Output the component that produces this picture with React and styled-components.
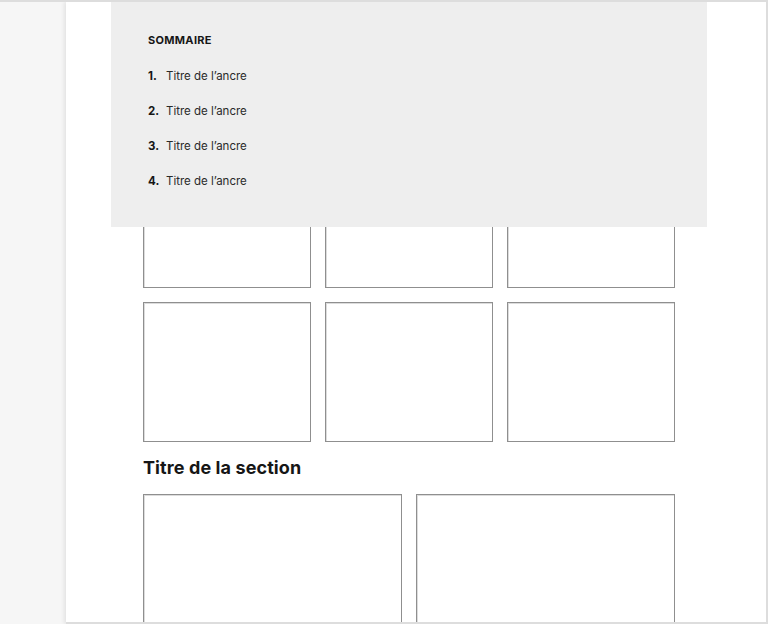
import React from "react";
import styled, { createGlobalStyle } from "styled-components";

const anchors = ["Titre de l’ancre", "Titre de l’ancre", "Titre de l’ancre", "Titre de l’ancre"];

const App = () => {
  return (
    <>
      <GlobalStyle />
      <Frame>
        <Side />
        <Panel>
          <Summary>
            <SummaryTitle>Sommaire</SummaryTitle>
            <SummaryList>
              {anchors.map((label, i) => (
                <SummaryItem key={i}>
                  <ItemNumber>{i + 1}.</ItemNumber>
                  <ItemLink>{label}</ItemLink>
                </SummaryItem>
              ))}
            </SummaryList>
          </Summary>
          <Content>
            <CardGrid cols={3}>
              <Card height={139} />
              <Card height={139} />
              <Card height={139} />
              <Card height={140} />
              <Card height={140} />
              <Card height={140} />
            </CardGrid>
            <SectionTitle>Titre de la section</SectionTitle>
            <CardGrid cols={2}>
              <Card height={160} />
              <Card height={160} />
            </CardGrid>
          </Content>
        </Panel>
      </Frame>
    </>
  );
};

export default App;

const GlobalStyle = createGlobalStyle`
  html, body {
    margin: 0;
    padding: 0;
    background: #f6f6f6;
    font-family: Inter, "Noto Sans", sans-serif;
    color: #161616;
  }
`;

const Frame = styled.div`
  display: flex;
  width: 768px;
  height: 624px;
  box-sizing: border-box;
  border-top: 2px solid #dddddd;
  border-right: 2px solid #dddddd;
  background: #f6f6f6;
  overflow: hidden;
`;

const Side = styled.div`
  width: 66px;
  flex-shrink: 0;
`;

const Panel = styled.div`
  position: relative;
  flex: 1;
  background: #ffffff;
  border-bottom: 2px solid #dddddd;
  box-shadow: -2px 0 4px rgba(0, 0, 0, 0.08);
  overflow: hidden;
`;

const Summary = styled.nav`
  position: absolute;
  top: 0;
  left: 45px;
  width: 596px;
  height: 225px;
  box-sizing: border-box;
  padding: 28px 37px 0;
  background: #eeeeee;
  z-index: 1;
`;

const SummaryTitle = styled.div`
  font-size: 11px;
  line-height: 20px;
  font-weight: 700;
  letter-spacing: 0.3px;
  text-transform: uppercase;
`;

const SummaryList = styled.ol`
  list-style: none;
  margin: 16px 0 0;
  padding: 0;
  display: flex;
  flex-direction: column;
  gap: 15px;
`;

const SummaryItem = styled.li`
  display: flex;
  font-size: 11.5px;
  line-height: 20px;
`;

const ItemNumber = styled.span`
  width: 18px;
  font-weight: 700;
`;

const ItemLink = styled.span`
  color: #2a2a2a;
`;

const Content = styled.div`
  width: 532px;
  padding: 147px 0 0 77px;
`;

const CardGrid = styled.div`
  display: grid;
  grid-template-columns: repeat(${(props) => props.cols}, 1fr);
  gap: 14px;
`;

const Card = styled.div`
  height: ${(props) => props.height}px;
  box-sizing: border-box;
  border: 1px solid #8f8f8f;
  box-shadow: inset 1px 1px 0 #dcdcdc;
  background: #ffffff;
`;

const SectionTitle = styled.h2`
  margin: 14px 0 14px;
  font-size: 18px;
  line-height: 24px;
  font-weight: 700;
  letter-spacing: 0.1px;
`;
